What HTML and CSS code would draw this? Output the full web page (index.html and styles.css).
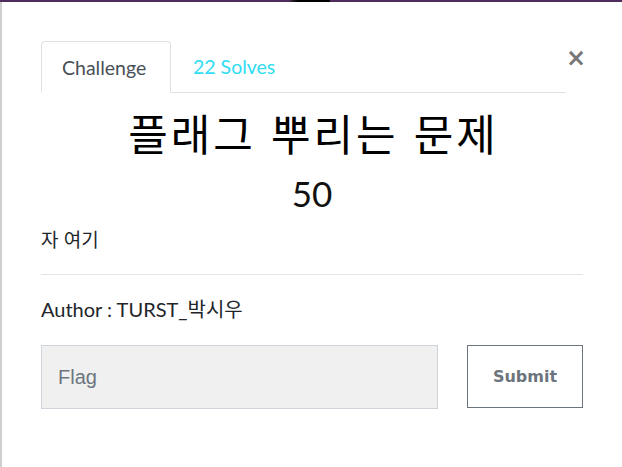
FILE: index.html
```html
<!DOCTYPE html>
<html lang="ko">
<head>
<meta charset="utf-8">
<link rel="stylesheet" href="styles.css">
</head>
<body>
<div class="topbar"><span class="seg-a"></span><span class="seg-b"></span><span class="seg-c"></span></div>
<div class="modal">
  <div class="head">
    <div class="tabs">
      <div class="tab active">Challenge</div>
      <div class="tab link">22 Solves</div>
    </div>
    <div class="close">&times;</div>
  </div>
  <h1 class="title">플래그 뿌리는 문제</h1>
  <div class="value">50</div>
  <p class="desc">자 여기</p>
  <hr class="rule">
  <p class="author">Author : TURST_박시우</p>
  <div class="form">
    <div class="input">Flag</div>
    <div class="btn">Submit</div>
  </div>
</div>
</body>
</html>
```
FILE: styles.css
```css
html, body { margin: 0; padding: 0; background: #fff; }
body { font-family: Lato, "Noto Sans CJK KR", sans-serif; color: #212529; width: 622px; height: 467px; overflow: hidden; }
.topbar { display: flex; height: 2px; }
.seg-a { width: 290px; background: #4e2d5c; }
.seg-b { width: 40px; background: linear-gradient(90deg, #3a2a3a, #000 20%, #000); }
.seg-c { flex: 1; background: #4e2d5c; }
.modal { border-left: 2px solid #cfcfcf; height: 465px; box-sizing: border-box; padding: 39px 39px 0 39px; }
.head { display: flex; align-items: flex-start; }
.tabs { display: flex; width: 525px; flex-shrink: 0; border-bottom: 1px solid #dee2e6; height: 52px; box-sizing: border-box; }
.tab { font-size: 19.5px; height: 52px; box-sizing: border-box; padding: 14px 20px 0 20px; }
.tab.active { color: #495057; border: 1px solid #dee2e6; border-bottom: 1px solid #fff; border-radius: 4px 4px 0 0; width: 130px; background: #fff; }
.tab.link { color: #2fdcf2; padding-left: 22px; }
.close { font-family: "DejaVu Sans", sans-serif; font-weight: bold; font-size: 24px; color: #777; line-height: 1; margin-top: 5px; margin-left: auto; margin-right: 2px; }
.title { font-family: "Noto Sans CJK KR", sans-serif; font-weight: 400; font-size: 43px; text-align: center; margin: 11px 0 0 0; line-height: 56px; color: #000; letter-spacing: 3px; text-indent: 3px; }
.value { font-family: Lato, sans-serif; font-size: 35px; text-align: center; line-height: 44px; margin-top: 11px; color: #111; }
.desc { font-family: "Noto Sans CJK KR", sans-serif; font-size: 19px; margin: 11px 0 0 0; line-height: 26px; }
.rule { border: 0; border-top: 1px solid #e5e5e5; margin: 22px 0 0 0; }
.author { font-size: 20px; margin: 21px 0 0 0; line-height: 26px; }
.form { display: flex; margin-top: 23px; justify-content: space-between; }
.input { width: 397px; height: 64px; box-sizing: border-box; background: #f0f0f0; border: 1px solid #ced4da; font-family: "Liberation Sans", sans-serif; font-size: 20px; color: #6c757d; padding: 20px 0 0 16px; }
.btn { width: 116px; height: 63px; box-sizing: border-box; border: 1px solid #6c757d; color: #6c757d; font-family: "DejaVu Sans", sans-serif; font-weight: bold; font-size: 16px; display: flex; align-items: center; justify-content: center; }
```
